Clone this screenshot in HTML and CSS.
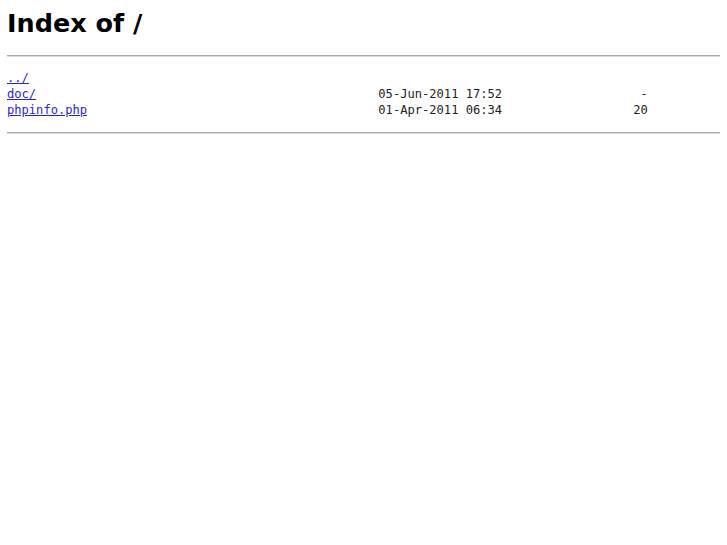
FILE: index.html
```
<!DOCTYPE html>
<html>
<head>
  <title>Index of /</title>
  <link rel="stylesheet" href="styles.css">
</head>
<body>
<h1>Index of /</h1><hr><pre><a href="../">../</a>
<a href="doc/">doc/</a>                                               05-Jun-2011 17:52                   -
<a href="phpinfo.php">phpinfo.php</a>                                        01-Apr-2011 06:34                  20
</pre><hr>
</body>
</html>
```
FILE: styles.css
```
body {
  margin: 7px;
  background: #fff;
  color: #000;
  font-family: "DejaVu Sans", sans-serif;
}

h1 {
  font-size: 25.5px;
  line-height: 30px;
  margin: 1px 0 17px;
}

hr {
  margin: 0;
  height: 0;
  border: 0;
  border-top: 1px solid #a8a8a8;
  border-bottom: 1px solid #dcdcdc;
}

pre {
  font-family: "DejaVu Sans Mono", monospace;
  font-size: 12.1px;
  line-height: 16px;
  margin: 13px 0 14px;
  color: #222;
}

a {
  color: #2a1fd6;
}
```
